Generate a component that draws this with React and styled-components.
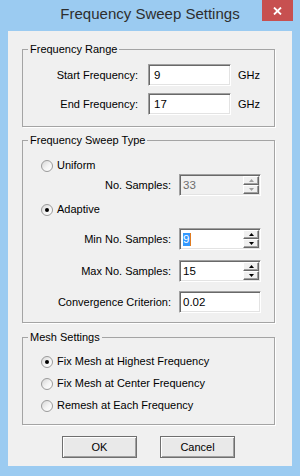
import React from 'react';
import styled, { createGlobalStyle } from 'styled-components';

const GlobalStyle = createGlobalStyle`
  html, body {
    margin: 0;
    padding: 0;
  }
  body {
    font-family: "Liberation Sans", Arial, sans-serif;
    font-size: 11px;
    color: #000;
  }
`;

const Window = styled.div`
  width: 300px;
  height: 476px;
  box-sizing: border-box;
  background: #9bcbf1;
  display: flex;
  flex-direction: column;
  padding: 0 8px 10px;
`;

const TitleBar = styled.div`
  height: 31px;
  flex: none;
  margin: 0 -8px;
  display: grid;
  grid-template-columns: 1fr auto 1fr;
`;

const Title = styled.div`
  grid-column: 2;
  margin-top: 4px;
  font-size: 15px;
  line-height: 20px;
  color: #2e2e2e;
  white-space: nowrap;
`;

const CloseButton = styled.button`
  grid-column: 3;
  justify-self: end;
  align-self: start;
  width: 31px;
  height: 21px;
  margin-right: 7px;
  padding: 0;
  border: none;
  background: #c75050;
  display: flex;
  align-items: center;
  justify-content: center;
`;

const Client = styled.div`
  flex: 1;
  background: #f0f0f0;
  padding: 12px 17px 8px 14px;
  display: flex;
  flex-direction: column;
`;

const GroupBox = styled.fieldset`
  margin: ${(p) => p.$mt || 0}px 0 0;
  padding: 0 0 ${(p) => p.$pb}px 5px;
  min-width: 0;
  border: 1px solid #a4a4a4;
  box-shadow: 1px 1px 0 #fff;
`;

const Legend = styled.legend`
  padding: 0 2px;
  font-size: 11px;
  line-height: 13px;
`;

const GroupBody = styled.div`
  padding: ${(p) => p.$pt}px 0 0 13px;
  display: flex;
  flex-direction: column;
`;

const FieldRow = styled.div`
  margin-top: ${(p) => p.$mt || 0}px;
  height: 22px;
  display: flex;
  align-items: center;
`;

const FieldLabel = styled.span`
  width: ${(p) => p.$w}px;
  margin-right: ${(p) => p.$gap}px;
  text-align: right;
  white-space: nowrap;
`;

const InputBox = styled.div`
  width: ${(p) => p.$w}px;
  height: 22px;
  box-sizing: border-box;
  padding: 1px;
  display: flex;
  border-style: solid;
  border-width: 1px;
  border-color: #a0a0a0 #fff #fff #a0a0a0;
  box-shadow: inset 1px 1px 0 #696969, inset -1px -1px 0 #e3e3e3;
  background: ${(p) => (p.$disabled ? '#f0f0f0' : '#fff')};
`;

const Value = styled.span`
  flex: 1;
  padding-left: ${(p) => p.$pad}px;
  line-height: 18px;
  font-size: 11.5px;
  color: ${(p) => (p.$disabled ? '#6d6d6d' : '#000')};
`;

const Selection = styled.span`
  background: #3399ff;
  color: #fff;
  padding: 0 1px 1px 0;
  border-right: 1px solid #e07b20;
`;

const Unit = styled.span`
  margin-left: 7px;
`;

const SpinColumn = styled.div`
  width: 16px;
  display: flex;
  flex-direction: column;
`;

const SpinButton = styled.div`
  flex: 1;
  box-sizing: border-box;
  background: #f0f0f0;
  border-style: solid;
  border-width: 1px;
  border-color: #fff #696969 #696969 #fff;
  box-shadow: inset -1px -1px 0 #a0a0a0;
  display: flex;
  align-items: center;
  justify-content: center;
`;

const RadioRow = styled.label`
  margin-top: ${(p) => p.$mt || 0}px;
  height: 13px;
  display: flex;
  align-items: center;
  line-height: 13px;
`;

const RadioCircle = styled.span`
  width: 12px;
  height: 12px;
  box-sizing: border-box;
  border-radius: 50%;
  border: 1px solid #9a9a9a;
  background: linear-gradient(135deg, #d6d6d6 0%, #f4f4f4 55%, #fff 100%);
  display: flex;
  align-items: center;
  justify-content: center;
  margin-right: 4px;
  &::after {
    content: '';
    width: 4px;
    height: 4px;
    border-radius: 50%;
    background: ${(p) => (p.$checked ? '#000' : 'transparent')};
  }
`;

const ButtonRow = styled.div`
  margin-top: 11px;
  display: flex;
  justify-content: center;
  gap: 23px;
`;

const DialogButton = styled.button`
  width: 75px;
  height: 22px;
  padding: 0;
  font-family: inherit;
  font-size: 11px;
  color: #000;
  background: #e9e9e9;
  border: 1px solid #6f6f6f;
  box-shadow: inset 1px 1px 0 #fff, inset -1px -1px 0 #a0a0a0;
`;

const Arrow = ({ up, color }) => (
  <svg width="5" height="3" viewBox="0 0 5 3">
    <path d={up ? 'M2.5 0 L5 3 L0 3 Z' : 'M0 0 L5 0 L2.5 3 Z'} fill={color} />
  </svg>
);

const Field = ({ label, value, labelWidth, gap, width, pad, unit, spin, disabled, selected }) => (
  <>
    <FieldLabel $w={labelWidth} $gap={gap}>{label}</FieldLabel>
    <InputBox $w={width} $disabled={disabled}>
      <Value $pad={pad} $disabled={disabled}>
        {selected ? <Selection>{value}</Selection> : value}
      </Value>
      {spin && (
        <SpinColumn>
          <SpinButton><Arrow up color={disabled ? '#a0a0a0' : '#000'} /></SpinButton>
          <SpinButton><Arrow color={disabled ? '#a0a0a0' : '#000'} /></SpinButton>
        </SpinColumn>
      )}
    </InputBox>
    {unit && <Unit>{unit}</Unit>}
  </>
);

const Radio = ({ label, checked, mt }) => (
  <RadioRow $mt={mt}>
    <RadioCircle $checked={checked} />
    {label}
  </RadioRow>
);

const App = () => (
  <Window>
    <GlobalStyle />
    <TitleBar>
      <Title>Frequency Sweep Settings</Title>
      <CloseButton aria-label="Close">
        <svg width="9" height="8" viewBox="0 0 9 8">
          <path d="M1 0.5 L8 7.5 M8 0.5 L1 7.5" stroke="#fff" strokeWidth="1.8" />
        </svg>
      </CloseButton>
    </TitleBar>
    <Client>
      <GroupBox $pb={11}>
        <Legend>Frequency Range</Legend>
        <GroupBody $pt={8}>
          <FieldRow>
            <Field label="Start Frequency:" value="9" labelWidth={97} gap={10} width={83} pad={4} unit="GHz" />
          </FieldRow>
          <FieldRow $mt={7}>
            <Field label="End Frequency:" value="17" labelWidth={97} gap={10} width={83} pad={4} unit="GHz" />
          </FieldRow>
        </GroupBody>
      </GroupBox>

      <GroupBox $mt={7} $pb={9}>
        <Legend>Frequency Sweep Type</Legend>
        <GroupBody $pt={12}>
          <Radio label="Uniform" />
          <FieldRow $mt={2}>
            <Field label="No. Samples:" value="33" labelWidth={130} gap={8} width={82} pad={2} spin disabled />
          </FieldRow>
          <Radio label="Adaptive" checked mt={7} />
          <FieldRow $mt={12}>
            <Field label="Min No. Samples:" value="9" labelWidth={130} gap={8} width={82} pad={2} spin selected />
          </FieldRow>
          <FieldRow $mt={10}>
            <Field label="Max No. Samples:" value="15" labelWidth={130} gap={8} width={82} pad={2} spin />
          </FieldRow>
          <FieldRow $mt={9}>
            <Field label="Convergence Criterion:" value="0.02" labelWidth={130} gap={8} width={82} pad={2} />
          </FieldRow>
        </GroupBody>
      </GroupBox>

      <GroupBox $mt={8} $pb={12}>
        <Legend>Mesh Settings</Legend>
        <GroupBody $pt={11}>
          <Radio label="Fix Mesh at Highest Frequency" checked />
          <Radio label="Fix Mesh at Center Frequency" mt={9} />
          <Radio label="Remesh at Each Frequency" mt={9} />
        </GroupBody>
      </GroupBox>

      <ButtonRow>
        <DialogButton>OK</DialogButton>
        <DialogButton>Cancel</DialogButton>
      </ButtonRow>
    </Client>
  </Window>
);

export default App;
